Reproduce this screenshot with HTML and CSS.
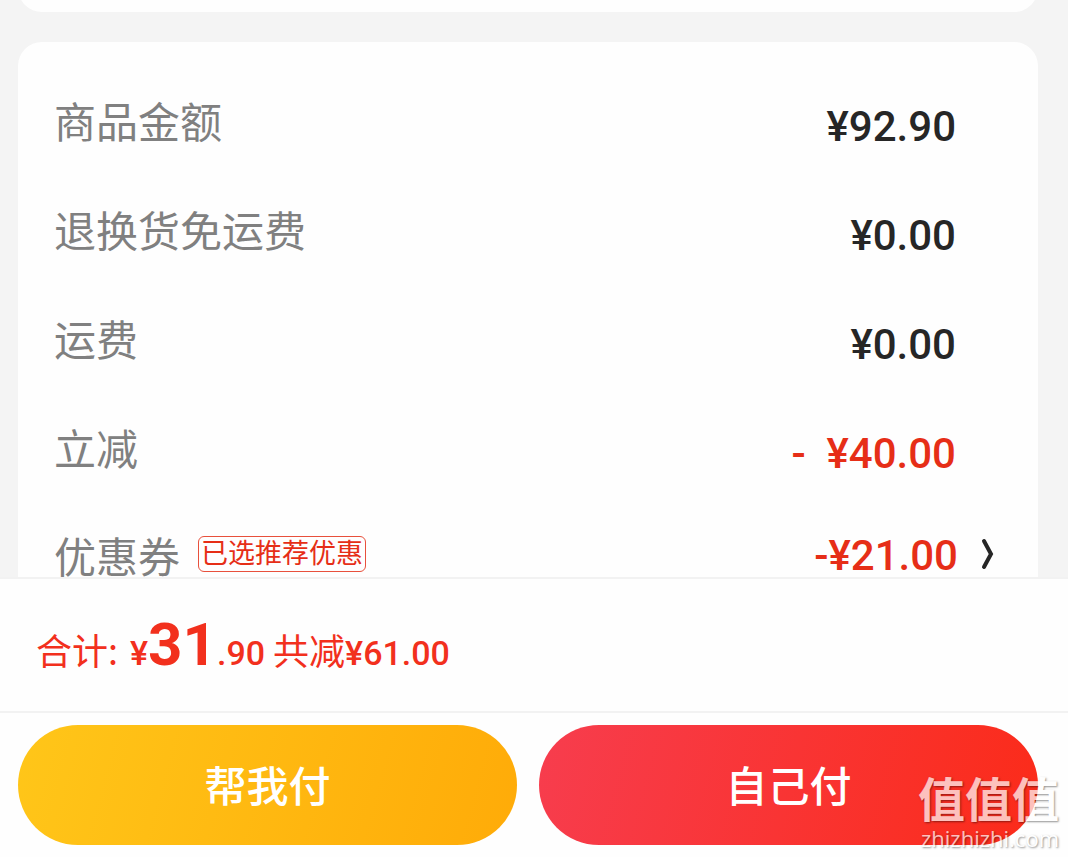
FILE: index.html
```html
<!DOCTYPE html>
<html lang="zh-CN">
<head>
    <meta charset="UTF-8">
    <meta name="viewport" content="width=device-width, initial-scale=1.0">
    <title>确认订单</title>
    <link rel="stylesheet" href="styles.css">
</head>
<body>

    <!-- Order details -->
    <main class="content">
        <section class="card card-previous"></section>

        <section class="card">
            <div class="row">
                <span class="label">商品金额</span>
                <span class="value">¥92.90</span>
            </div>
            <div class="row">
                <span class="label">退换货免运费</span>
                <span class="value">¥0.00</span>
            </div>
            <div class="row">
                <span class="label">运费</span>
                <span class="value">¥0.00</span>
            </div>
            <div class="row">
                <span class="label">立减</span>
                <span class="value discount">- &nbsp;¥40.00</span>
            </div>
            <a class="row row-link" href="#coupons">
                <span class="label">优惠券</span>
                <span class="tag">已选推荐优惠</span>
                <span class="value discount">-¥21.00</span>
                <svg class="arrow" viewBox="0 0 14 32" aria-hidden="true">
                    <path d="M3 3 L10 16 L3 29"/>
                </svg>
            </a>
        </section>
    </main>

    <!-- Total and payment buttons -->
    <footer class="footer">
        <div class="total">
            <span class="total-text">合计:</span>
            <span class="price">¥<b class="price-big">31</b>.90</span>
            <span class="total-text">共减<span class="saved">¥61.00</span></span>
        </div>
        <div class="actions">
            <button type="button" class="btn btn-help">帮我付</button>
            <button type="button" class="btn btn-self">自己付</button>
        </div>
    </footer>

    <!-- Watermark -->
    <div class="watermark">
        <div class="watermark-name">值值值</div>
        <div class="watermark-site">zhizhizhi.com</div>
    </div>

</body>
</html>
```
FILE: styles.css
```css
/* General Page Styling */
* {
    box-sizing: border-box;
}

body {
    font-family: "Noto Sans CJK SC", sans-serif;
    background-color: #f4f4f4;
    margin: 0;
    height: 100vh;
    display: flex;
    flex-direction: column;
}

/* Order details */
.content {
    flex: 1;
    min-height: 0;
    overflow: hidden;
    padding: 0 30px 0 18px;
}

.card {
    background: #fefefe;
    border-radius: 24px;
    padding: 27px 0;
}

/* Only the bottom edge of this card is still in view */
.card-previous {
    margin: -42px 0 30px;
}

.row {
    display: flex;
    align-items: center;
    height: 109px;
    padding: 0 82px 0 36px;
}

.label {
    color: #808080;
    font-size: 42px;
    line-height: 60px;
    padding-bottom: 8px;
}

.value {
    font-family: Roboto, sans-serif;
    font-weight: 500;
    font-size: 42px;
    line-height: 60px;
    color: #262626;
    margin-left: auto;
    padding-top: 6px;
}

.discount {
    color: #e62e17;
}

/* Coupon row */
.row-link {
    height: 102px;
    padding-right: 43px;
    text-decoration: none;
}

.row-link .label {
    padding-bottom: 2px;
}

.row-link .value {
    padding-top: 0;
}

.tag {
    border: 1px solid #e8503c;
    border-radius: 6px;
    color: #e62e17;
    font-size: 27px;
    line-height: 30px;
    padding: 0 2px 4px;
    margin: 0 0 4px 18px;
}

.arrow {
    width: 14px;
    height: 32px;
    margin: 0 0 4px 23px;
    fill: none;
    stroke: #262626;
    stroke-width: 4;
    stroke-linecap: round;
}

/* Footer */
.footer {
    background: #fefefe;
    border-top: 2px solid #f2f2f2;
}

.total {
    display: flex;
    align-items: baseline;
    height: 134px;
    padding: 26px 36px 0;
    border-bottom: 2px solid #f2f2f2;
    color: #f2301d;
    font-size: 36px;
    line-height: 80px;
}

.price,
.saved {
    font-family: Roboto, sans-serif;
    font-size: 34px;
    font-weight: 500;
}

.price {
    margin: 0 8px 0 12px;
}

.price-big {
    font-size: 60px;
    font-weight: 700;
}

/* Buttons */
.actions {
    display: flex;
    gap: 22px;
    padding: 12px 30px 12px 18px;
}

.btn {
    flex: 1;
    height: 120px;
    padding: 0 0 4px;
    border: none;
    border-radius: 60px;
    font-family: inherit;
    font-size: 42px;
    font-weight: 500;
    color: white;
    cursor: pointer;
}

.btn-help {
    background: linear-gradient(105deg, #ffc619, #ffab08);
}

.btn-self {
    background: linear-gradient(105deg, #f73d4e, #fb2b19);
}

/* Watermark */
.watermark {
    position: absolute;
    right: 9px;
    bottom: 5px;
    color: white;
    opacity: 0.7;
    text-shadow: 1px 1px 2px rgba(0, 0, 0, 0.6);
    pointer-events: none;
    text-align: right;
}

.watermark-name {
    font-size: 47px;
    font-weight: 700;
    line-height: 54px;
}

.watermark-site {
    font-family: "Open Sans", sans-serif;
    font-size: 22px;
    line-height: 28px;
}
```
